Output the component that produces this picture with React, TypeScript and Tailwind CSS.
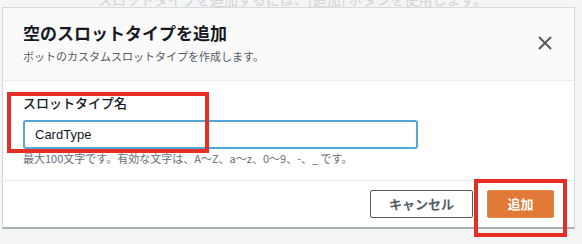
import React from "react";

const font = { fontFamily: '"Noto Sans CJK JP", "Noto Sans", sans-serif' };

const App = () => {
  return (
    <div className="relative w-[582px] h-[244px] overflow-hidden bg-[#f4f5f5]" style={font}>
      {/* page text behind the modal, cut off at the top */}
      <div className="h-[7px] overflow-hidden">
        <p className="-mt-[11px] ml-[98px] text-[14px] leading-[20px] text-[#d2d4d6] whitespace-nowrap">
          スロットタイプを追加するには、[追加] ボタンを使用します。
        </p>
      </div>

      <div className="ml-[2px] w-[573px] bg-white border border-[#d5dbdb] border-b-2 border-b-[#a9b1b5]">
        {/* header */}
        <div className="h-[73px] bg-[#fafafa] border-b border-[#eaeded] pl-[20px] pr-[22px] pt-[13px] flex justify-between items-start">
          <div className="flex flex-col gap-[3px]">
            <p className="text-[17px] leading-[24px] font-bold text-[#16191f]">空のスロットタイプを追加</p>
            <p className="text-[11px] leading-[16px] text-[#545b64]">ボットのカスタムスロットタイプを作成します。</p>
          </div>
          <svg width="14" height="14" viewBox="0 0 14 14" className="mt-[15px]">
            <path d="M1.5 1.5 L12.5 12.5 M12.5 1.5 L1.5 12.5" stroke="#545b64" strokeWidth="2" strokeLinecap="round" />
          </svg>
        </div>

        {/* body */}
        <div className="pl-[20px] pt-[12px] pb-[15px]">
          <p className="text-[13px] leading-[20px] font-medium text-[#16191f]">スロットタイプ名</p>
          <div className="mt-[7px] w-[395px] h-[29px] border-2 border-[#55a5d5] rounded-[3px] bg-white flex items-center pl-[10px]">
            <span className="text-[13px] text-[#16191f]" style={{ fontFamily: '"Liberation Sans", "Noto Sans CJK JP", sans-serif' }}>
              CardType
            </span>
          </div>
          <p className="mt-[2px] text-[11px] leading-[14px] text-[#687078]">
            最大100文字です。有効な文字は、A〜Z、a〜z、0〜9、-、_ です。
          </p>
        </div>

        {/* footer */}
        <div className="border-t border-[#eaeded] flex justify-end items-center gap-[14px] pr-[20px] pt-[9px] pb-[9px]">
          <button className="w-[103px] h-[28px] border border-[#545b64] rounded-[2px] bg-white text-[13px] font-bold text-[#545b64]">
            キャンセル
          </button>
          <button className="w-[67px] h-[28px] rounded-[2px] bg-[#e07a36] border border-[#e6864a] text-[13px] font-bold text-white">
            追加
          </button>
        </div>
      </div>

      {/* annotation boxes */}
      <div className="absolute left-[7px] top-[92px] w-[202px] h-[61px] border-4 border-[#e52f26]" />
      <div className="absolute left-[474px] top-[179px] w-[93px] h-[58px] border-4 border-[#e52f26]" />
    </div>
  );
};

export default App;
